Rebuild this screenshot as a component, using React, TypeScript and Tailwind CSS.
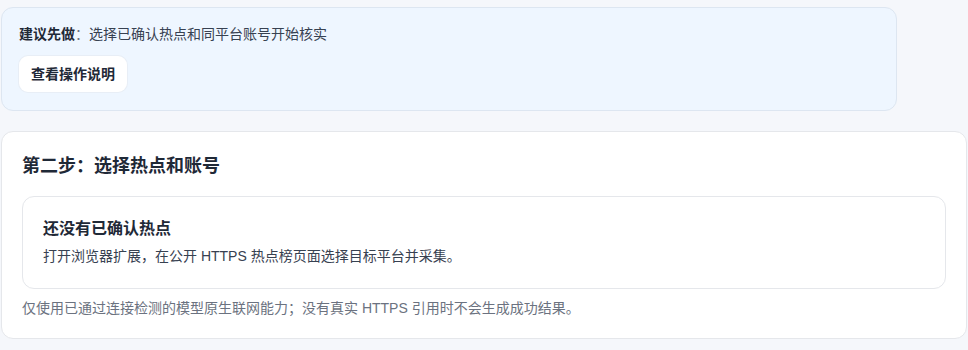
export default function App() {
  return (
    <div
      className="min-h-screen bg-[#f5f7fb] px-px pt-[7px] pb-3 text-[14px] text-[#374151]"
      style={{ fontFamily: '"Liberation Sans", "Noto Sans CJK SC", sans-serif' }}
    >
      {/* 建议卡片 */}
      <div className="w-[896px] rounded-xl border border-[#dde6f1] bg-[#eef6ff] px-[17px] pt-4 pb-[18px]">
        <p className="leading-5">
          <span className="font-bold text-[#1f2937]">建议先做</span>
          <span className="text-[#6b7280]">：</span>
          <span>选择已确认热点和同平台账号开始核实</span>
        </p>
        <button className="mt-3 h-9 rounded-[9px] bg-white px-3 text-[14px] font-bold text-[#1f2937] shadow-[0_0_0_1px_#e8eef6]">
          查看操作说明
        </button>
      </div>

      {/* 第二步 */}
      <div className="mt-5 rounded-xl border border-[#e5e7eb] bg-white px-5 pt-5 pb-5">
        <h2 className="text-[18px] leading-7 font-semibold text-[#1f2937]">第二步：选择热点和账号</h2>
        <div className="mt-4 rounded-xl border border-[#e5e7eb] bg-white px-5 pt-5 pb-[22px]">
          <h3 className="text-[16px] leading-6 font-semibold text-[#1f2937]">还没有已确认热点</h3>
          <p className="mt-[5px] leading-5 text-[#374151]">打开浏览器扩展，在公开 HTTPS 热点榜页面选择目标平台并采集。</p>
        </div>
        <p className="mt-[9px] leading-5 text-[#6b7280]">
          仅使用已通过连接检测的模型原生联网能力；没有真实 HTTPS 引用时不会生成成功结果。
        </p>
      </div>
    </div>
  );
}
